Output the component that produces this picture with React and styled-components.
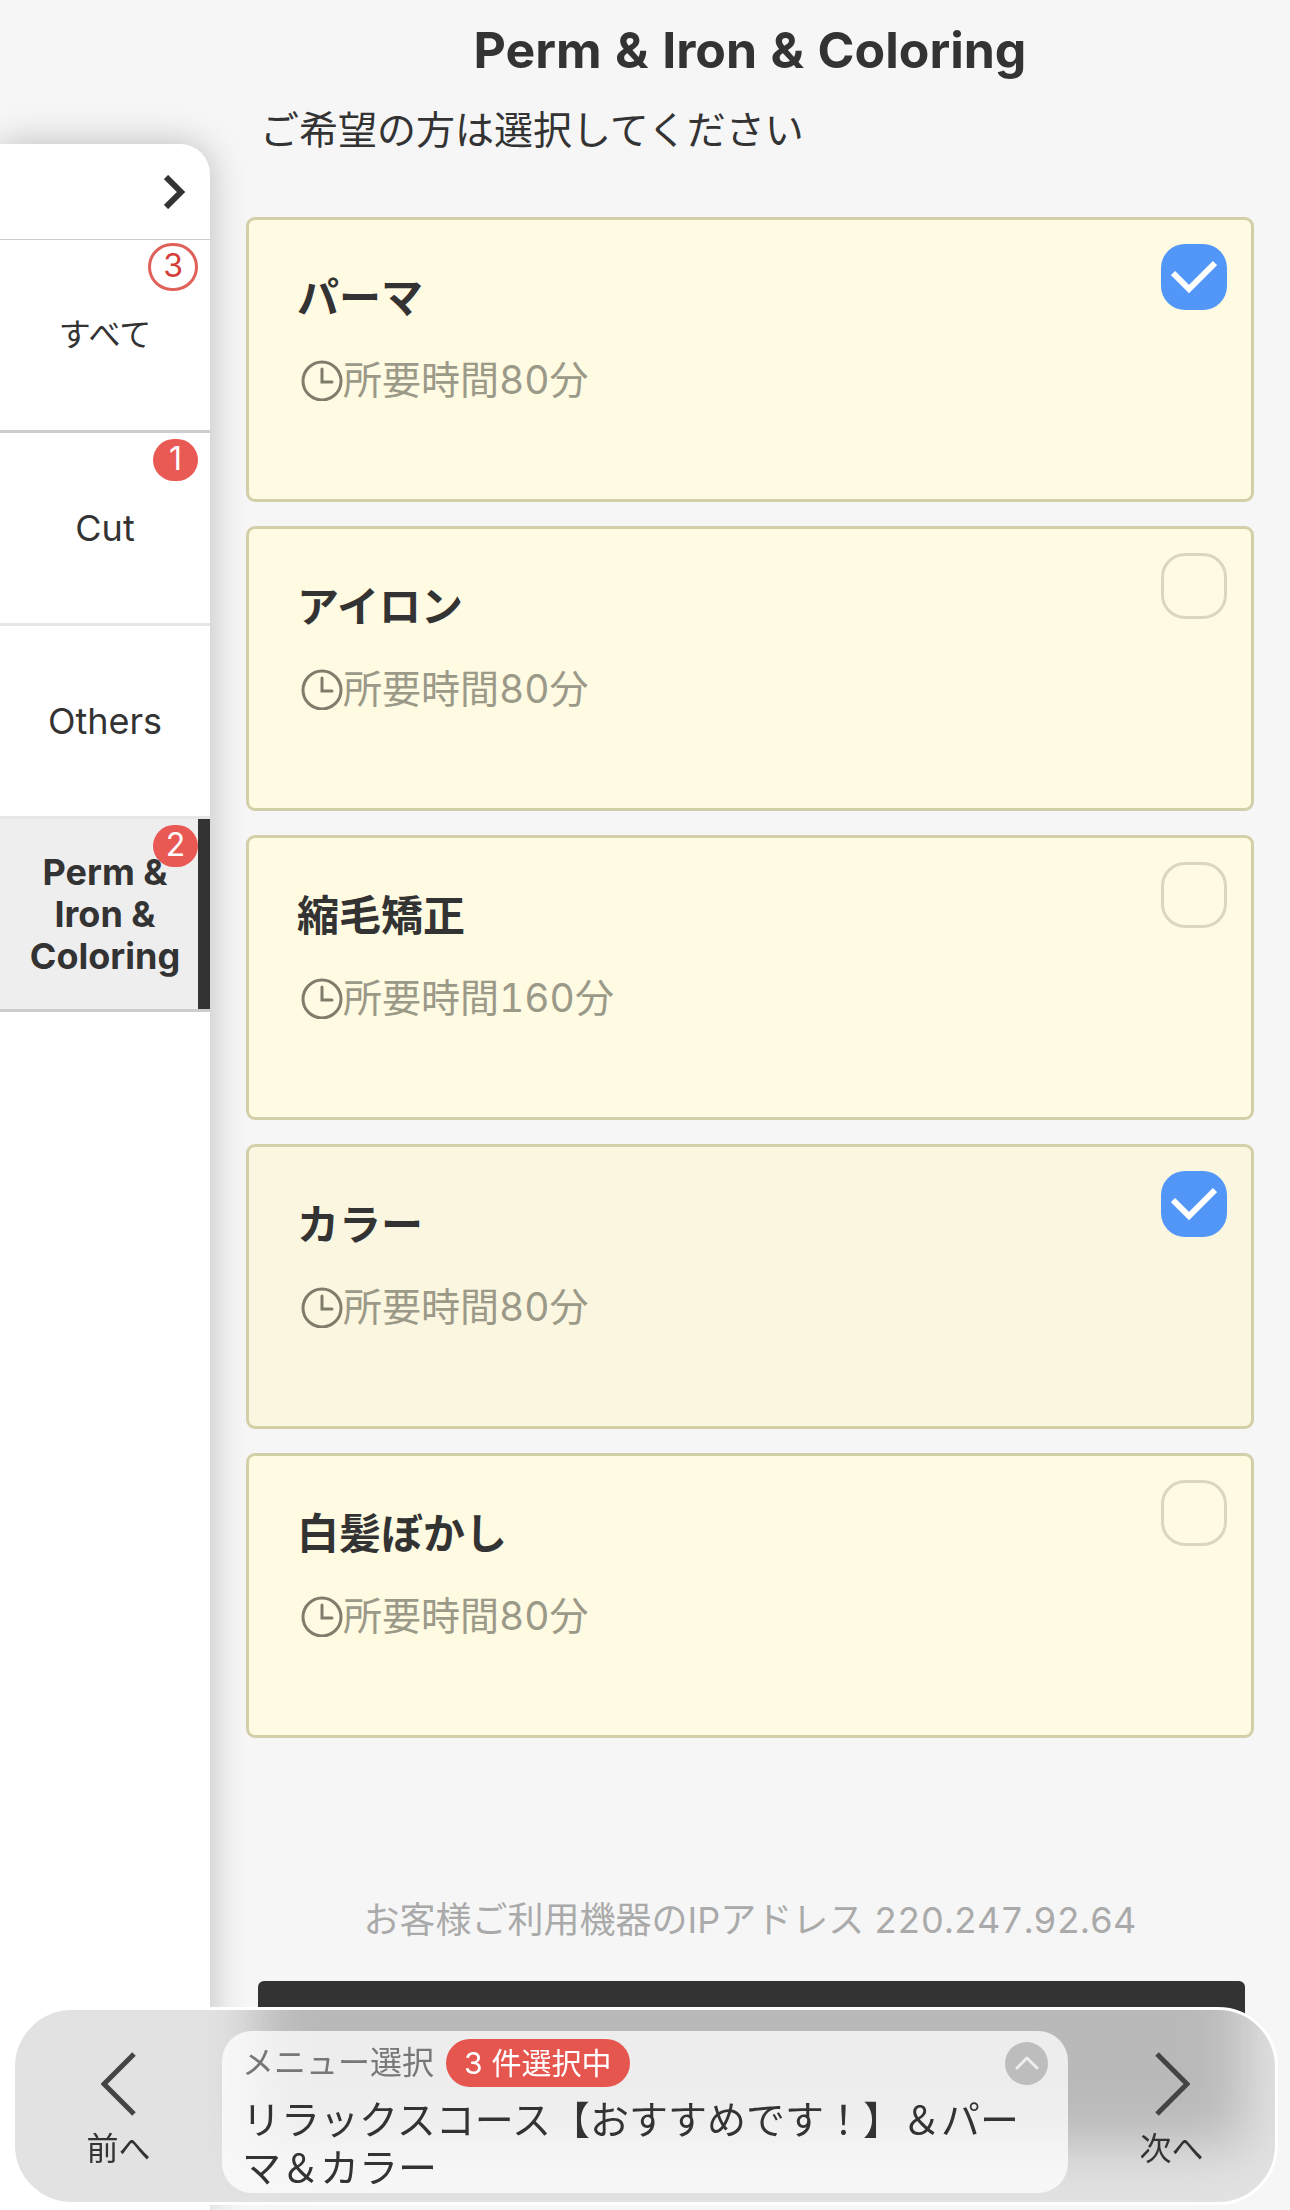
import React, { useState } from "react";
import styled, { createGlobalStyle } from "styled-components";

const GlobalStyle = createGlobalStyle`
  * {
    box-sizing: border-box;
  }
  body {
    margin: 0;
    background: #f6f6f6;
    color: #333;
    font-family: Inter, "Noto Sans CJK JP", sans-serif;
    font-variant-numeric: tabular-nums;
  }
  button {
    padding: 0;
    border: 0;
    background: none;
    color: inherit;
    font-family: inherit;
    cursor: pointer;
  }
`;

const categories = [
  { id: "all", label: "すべて", count: 3 },
  { id: "cut", label: "Cut", count: 1 },
  { id: "others", label: "Others", count: 0 },
  { id: "perm", label: "Perm & Iron & Coloring", count: 2 },
];

const menus = [
  { id: 1, name: "パーマ", minutes: 80, checked: true },
  { id: 2, name: "アイロン", minutes: 80 },
  { id: 3, name: "縮毛矯正", minutes: 160 },
  { id: 4, name: "カラー", minutes: 80, checked: true, pressed: true },
  { id: 5, name: "白髪ぼかし", minutes: 80 },
];

export default function App() {
  const [active, setActive] = useState("perm");

  return (
    <React.Fragment>
      <GlobalStyle />
      <Page>
        <Sidebar>
          <Toggle aria-label="開く">
            <svg width="22" height="34" viewBox="0 0 22 34" fill="none">
              <path d="M2 2 17 17 2 32" stroke="#333" strokeWidth="6" />
            </svg>
          </Toggle>
          {categories.map((item) => (
            <Category
              key={item.id}
              $all={item.id === "all"}
              $active={item.id === active}
              onClick={() => setActive(item.id)}
            >
              {item.label}
              {item.count > 0 && (
                <Badge $outline={item.id === "all"}>{item.count}</Badge>
              )}
            </Category>
          ))}
        </Sidebar>
        <Main>
          <Title>Perm &amp; Iron &amp; Coloring</Title>
          <Lead>ご希望の方は選択してください</Lead>
          <MenuList>
            {menus.map((menu) => (
              <MenuCard key={menu.id} menu={menu} />
            ))}
          </MenuList>
          <Address>お客様ご利用機器のIPアドレス 220.247.92.64</Address>
          <Submit aria-label="送信" />
        </Main>
      </Page>
      <BottomBar>
        <Step>
          <svg width="36" height="64" viewBox="0 0 36 64" fill="none">
            <path d="M33 2 3 32 33 62" stroke="#444" strokeWidth="5" />
          </svg>
          前へ
        </Step>
        <Summary>
          <SummaryHead>
            メニュー選択
            <Count>3 件選択中</Count>
            <Expand aria-label="詳細">
              <svg width="24" height="14" viewBox="0 0 24 14" fill="none">
                <path
                  d="M2 12 12 2 22 12"
                  stroke="#eee"
                  strokeWidth="3"
                  strokeLinecap="round"
                  strokeLinejoin="round"
                />
              </svg>
            </Expand>
          </SummaryHead>
          <SummaryText>
            リラックスコース【おすすめです！】＆パーマ＆カラー
          </SummaryText>
        </Summary>
        <Step>
          <svg width="36" height="64" viewBox="0 0 36 64" fill="none">
            <path d="M3 2 33 32 3 62" stroke="#444" strokeWidth="5" />
          </svg>
          次へ
        </Step>
      </BottomBar>
    </React.Fragment>
  );
}

function MenuCard({ menu }) {
  const [checked, setChecked] = useState(Boolean(menu.checked));
  return (
    <Card $pressed={menu.pressed}>
      <CardBody>
        <Name>{menu.name}</Name>
        <Duration>
          <svg width="42" height="42" viewBox="0 0 42 42" fill="none">
            <circle cx="21" cy="22" r="19" stroke="#7f7c6b" strokeWidth="3" />
            <path
              d="M21 10V23H31"
              stroke="#7f7c6b"
              strokeWidth="3"
              strokeLinecap="round"
            />
          </svg>
          所要時間{menu.minutes}分
        </Duration>
      </CardBody>
      <Check>
        <input
          type="checkbox"
          checked={checked}
          onChange={() => setChecked(!checked)}
        />
        {checked && (
          <svg width="46" height="34" viewBox="0 0 46 34" fill="none">
            <path d="M2 13 18 29 44 3" stroke="#fff" strokeWidth="6" />
          </svg>
        )}
      </Check>
    </Card>
  );
}

const Page = styled.div`
  display: flex;
  min-height: 100vh;
`;

const Sidebar = styled.nav`
  display: flex;
  flex-direction: column;
  flex: none;
  width: 210px;
  margin-top: 144px;
  background: #fff;
  border-radius: 0 30px 0 0;
  box-shadow: 0 0 36px rgba(0, 0, 0, 0.24);
`;

const Toggle = styled.button`
  display: flex;
  align-items: center;
  justify-content: flex-end;
  height: 96px;
  padding-right: 24px;
  border-bottom: 1px solid #ccc;
`;

const Category = styled.button`
  position: relative;
  min-height: 193px;
  padding: 0 20px;
  border-bottom: 3px solid
    ${(props) => (props.$all || props.$active ? "#ccc" : "#e6e6e6")};
  background: ${(props) => (props.$active ? "#eee" : "none")};
  box-shadow: ${(props) => (props.$active ? "inset -12px 0 #333" : "none")};
  font-size: ${(props) => (props.$all ? "32px" : "36px")};
  font-weight: ${(props) => (props.$active ? 700 : 400)};
  line-height: 42px;
`;

const Badge = styled.span`
  position: absolute;
  top: ${(props) => (props.$outline ? "3px" : "6px")};
  right: 12px;
  min-width: 45px;
  padding: 0 12px 2px;
  border: ${(props) => (props.$outline ? "3px solid #e0605a" : "0")};
  border-radius: 24px;
  background: ${(props) => (props.$outline ? "none" : "rgba(231, 76, 70, 0.92)")};
  color: ${(props) => (props.$outline ? "#d33f37" : "#fff")};
  font-size: 32px;
  font-weight: 400;
  line-height: 40px;
  text-align: center;
`;

const Main = styled.main`
  display: flex;
  flex-direction: column;
  flex: 1;
  min-width: 0;
  padding: 20px 36px 60px;
`;

const Title = styled.h1`
  margin: 0;
  font-size: 50px;
  line-height: 60px;
  text-align: center;
`;

const Lead = styled.p`
  margin: 20px 0 57px;
  padding: 0 14px;
  font-size: 39px;
  line-height: 60px;
`;

const MenuList = styled.div`
  display: grid;
  gap: 24px;
`;

const Card = styled.label`
  display: flex;
  align-items: flex-start;
  justify-content: space-between;
  min-height: 285px;
  padding: 24px;
  border: 3px solid #d3cfa8;
  border-radius: 9px;
  background: ${(props) => (props.$pressed ? "#fbf6df" : "#fffae2")};
  cursor: pointer;
`;

const CardBody = styled.div`
  padding: 24px;
`;

const Name = styled.div`
  font-size: 42px;
  font-weight: 700;
  line-height: 60px;
`;

const Duration = styled.div`
  display: flex;
  align-items: center;
  margin-top: 28px;
  padding-left: 4px;
  color: #9b9988;
  font-size: 39px;
  line-height: 48px;
`;

const Check = styled.span`
  display: grid;
  place-items: center;
  flex: none;

  input {
    appearance: none;
    grid-area: 1 / 1;
    width: 66px;
    height: 66px;
    margin: 0;
    border: 3px solid #dad7c1;
    border-radius: 24px;
  }
  input:checked {
    border: 0;
    background: #5297f8;
  }
  svg {
    grid-area: 1 / 1;
    z-index: 1;
    pointer-events: none;
  }
`;

const Address = styled.p`
  margin: 152px 0 31px;
  color: #aaa;
  font-size: 36px;
  line-height: 60px;
  text-align: center;
`;

const Submit = styled.button`
  height: 135px;
  margin: 0 9px 0 12px;
  border-radius: 6px;
  background: #333;
`;

const BottomBar = styled.footer`
  position: fixed;
  right: 12px;
  bottom: 5px;
  left: 12px;
  z-index: 2;
  display: flex;
  overflow: hidden;
  padding: 21px 0 9px;
  border: 3px solid #fff;
  border-radius: 60px;
  background: #e2e2e2;

  /* soft shade of the submit button behind the frosted bar */
  &::before {
    content: "";
    position: absolute;
    z-index: -1;
    inset: -80px 30px 56px 243px;
    background: #b9b9b9;
    filter: blur(26px);
  }
`;

const Step = styled.button`
  display: flex;
  flex-direction: column;
  align-items: center;
  flex: none;
  gap: 9px;
  width: 207px;
  padding-top: 21px;
  font-size: 32px;
  line-height: 48px;
`;

const Summary = styled.section`
  flex: 1;
  min-width: 0;
  min-height: 162px;
  padding: 5px 20px 0;
  border-radius: 30px;
  background: rgba(255, 255, 255, 0.75);
`;

const SummaryHead = styled.div`
  display: flex;
  align-items: center;
  gap: 12px;
  color: #777;
  font-size: 32px;
  line-height: 54px;
`;

const Count = styled.span`
  padding: 0 18px;
  border-radius: 24px;
  background: #e5564f;
  color: #fff;
  font-size: 30px;
  line-height: 48px;
`;

const Expand = styled.button`
  display: grid;
  place-items: center;
  width: 43px;
  height: 43px;
  margin-left: auto;
  border-radius: 50%;
  background: #bdbdbd;
`;

const SummaryText = styled.p`
  margin: 6px 0 0;
  font-size: 39px;
  line-height: 48px;
`;
